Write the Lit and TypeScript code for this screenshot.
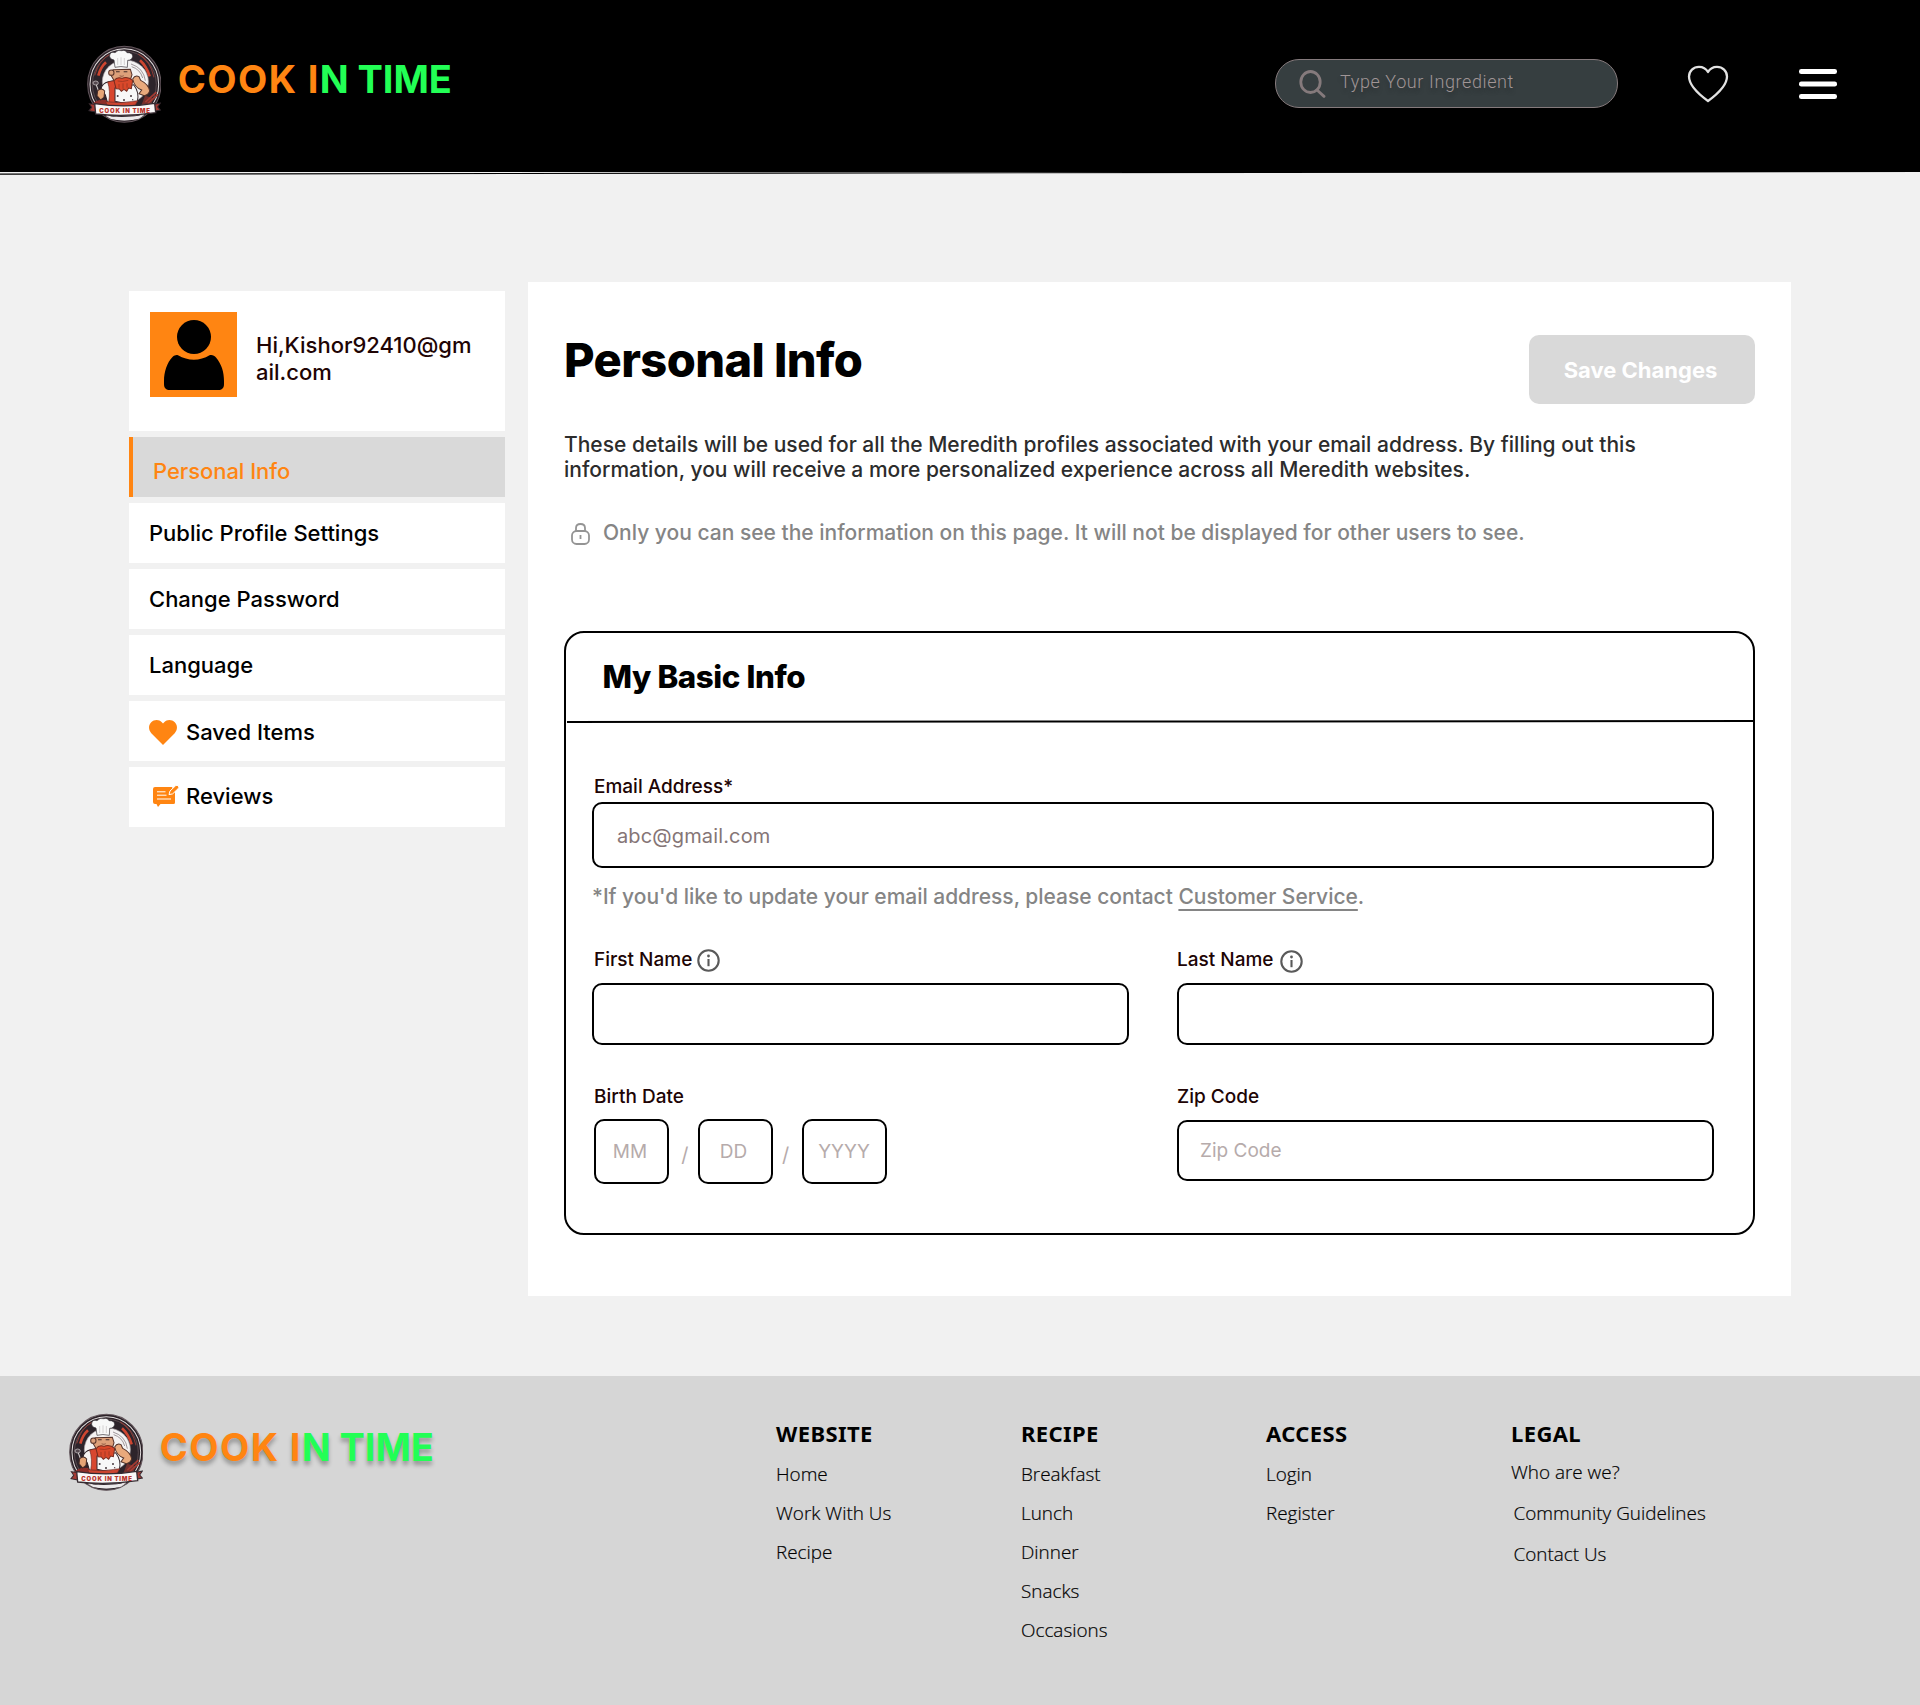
import { LitElement, html, svg, css } from "lit";
import { customElement, property } from "lit/decorators.js";
import { classMap } from "lit/directives/class-map.js";

const chefBadge = svg`
  <ellipse cx="162" cy="161" rx="110" ry="114" fill="#2a2127" stroke="#65585e" stroke-width="3"/>
  <ellipse cx="162" cy="161" rx="103" ry="107" fill="none" stroke="#e4dedf" stroke-width="3"/>
  <ellipse cx="162" cy="161" rx="96" ry="100" fill="#2d242b" stroke="#6f5f64" stroke-width="2"/>
  <path d="M84 135 Q91 109 107 95" fill="none" stroke="#cf4630" stroke-width="8"/>
  <path d="M209 89 Q228 106 238 137" fill="none" stroke="#cf4630" stroke-width="8"/>
  <path d="M73 134 Q86 88 118 71 M204 70 Q240 90 251 140" fill="none" stroke="#8d3d37" stroke-width="3"/>
  <ellipse cx="165" cy="153" rx="69" ry="65" fill="#f4f2f2" stroke="#afa8ab" stroke-width="2"/>
  <path d="M182 100 Q220 112 225 150 M184 108 Q210 116 217 142" fill="none" stroke="#74696e" stroke-width="2"/>
  <path d="M224 195 L250 203 L240 224 L213 224 Z" fill="#74302d"/>
  <path d="M225 214 L258 184 M232 219 L263 191" stroke="#a63b32" stroke-width="5"/>
  <path d="M64 223 Q78 203 112 208 L114 226 Z" fill="#8d2f2a"/>
  <path d="M92 173 Q96 158 114 153 L136 149 L135 217 L112 217 L105 193 Z" fill="#f7f4f2" stroke="#2b2025" stroke-width="3"/>
  <path d="M112 154 L137 149 L136 217 L115 216 Q121 181 112 154 Z" fill="#d8472f" stroke="#6e2922" stroke-width="2"/>
  <path d="M134 172 L190 162 Q208 186 201 212 Q168 222 134 212 Z" fill="#f8f8f8" stroke="#352a30" stroke-width="3"/>
  <circle cx="142" cy="196" r="3" fill="#46383e"/><circle cx="161" cy="208" r="3" fill="#46383e"/>
  <circle cx="182" cy="196" r="3" fill="#46383e"/><circle cx="187" cy="207" r="2" fill="#46383e"/>
  <path d="M187 145 Q194 132 206 138 L211 149 Q234 160 238 181 Q234 193 222 195 L206 189 L214 178 Q192 170 187 145 Z" fill="#e9a97c" stroke="#513129" stroke-width="3"/>
  <path d="M128 117 L180 116 L185 132 L179 151 L132 151 L121 132 Z" fill="#dda07a" stroke="#563229" stroke-width="3"/>
  <circle cx="123" cy="126" r="8" fill="#dda07a" stroke="#563229" stroke-width="3"/>
  <path d="M137 123 h11 M160 123 h11" stroke="#422b28" stroke-width="3"/>
  <path d="M148 135 Q154 139 160 135" fill="none" stroke="#8c5542" stroke-width="3"/>
  <path d="M131 150 Q140 137 155 143 Q172 136 187 149 L183 174 L175 172 L169 182 L161 176 L153 182 L147 175 L137 174 Z" fill="#d9482a" stroke="#762c20" stroke-width="3"/>
  <path d="M142 151 Q155 155 174 149 M146 160 V171 M158 158 V174 M170 158 V171" fill="none" stroke="#8d301f" stroke-width="2"/>
  <path d="M134 110 L131 88 Q116 85 118 73 Q121 62 134 66 Q143 56 154 60 Q166 57 170 66 Q186 65 187 77 Q185 89 172 89 L171 110 Q151 105 134 110 Z" fill="#f8f8f8" stroke="#38333a" stroke-width="2"/>
  <path d="M142 82 V103 M152 80 V103 M162 82 V103" stroke="#c2bec0" stroke-width="2"/>
  <ellipse cx="76" cy="157" rx="8" ry="6" fill="#55484f" stroke="#dad5d6" stroke-width="2"/>
  <path d="M78 163 L88 190" stroke="#d6d0d0" stroke-width="3"/>
  <path d="M82 180 Q93 169 103 181 L101 200 L91 208 L80 195 Z" fill="#e5a576" stroke="#4a2d27" stroke-width="3"/>
  <path d="M106 213 Q155 220 202 210 L195 223 Q154 232 111 225 Z" fill="#cc4530" stroke="#732c25" stroke-width="2"/>
  <path d="M57 219 L82 222 L82 245 L56 240 L64 230 Z M270 217 L245 222 L245 243 L270 238 L262 229 Z" fill="#a63a33" stroke="#352a30" stroke-width="3"/>
  <path d="M73 219 Q164 233 253 218 L256 246 Q164 260 76 250 Z" fill="#faf8f8" stroke="#352a30" stroke-width="4"/>
  <path d="M106 256 Q163 263 222 253 L206 264 Q164 273 122 265 Z" fill="#ece9ea"/>
  <text x="87" y="246" class="ribbon" textLength="152" lengthAdjust="spacing">COOK IN TIME</text>
`;

@customElement("brand-logo")
export class BrandLogo extends LitElement {
  @property({ type: Boolean }) shadow = false;

  static styles = css`
    :host { display: block; }
    .brand { display: flex; align-items: flex-start; }
    .badge { display: block; width: 74.7px; height: 78.7px; flex: none; }
    .ribbon { font: 900 18px Inter, sans-serif; fill: #b8352c; }
    .name {
      font: 700 38px/46px Inter, sans-serif;
      margin: 11px 0 0 16.4px;
      white-space: nowrap;
      color: #ff8512;
      letter-spacing: 1.4px;
    }
    .rest { color: #22ff55; letter-spacing: -0.1px; }
    .shadow { text-shadow: 0 4px 4px rgba(0, 0, 0, 0.3); }
  `;

  render() {
    return html`<div class="brand">
      <svg class="badge" viewBox="50 43 224 236">${chefBadge}</svg>
      <div class=${classMap({ name: true, shadow: this.shadow })}>COOK I<span class="rest">N TIME</span></div>
    </div>`;
  }
}

@customElement("site-header")
export class SiteHeader extends LitElement {
  static styles = css`
    :host { display: block; }
    .bar { height: 172px; background: #000; display: flex; align-items: flex-start; }
    .logo { margin: 45px 0 0 86.7px; }
    .search {
      box-sizing: border-box;
      width: 343px; height: 49px;
      margin: 59px 0 0 auto;
      border: 1px solid #857a7c; border-radius: 24px;
      background: #363e40;
      display: flex; align-items: flex-start;
    }
    .glass { width: 27px; height: 28px; margin: 10px 0 0 22.5px; }
    .hint {
      font: 300 18px/22px Roboto, sans-serif;
      letter-spacing: 0.6px;
      margin: 11px 0 0 14.5px;
      color: #a09596;
      text-shadow: 0 4px 4px rgba(0, 0, 0, 0.25);
    }
    .heart { width: 42px; height: 38px; margin: 65px 0 0 69px; }
    .menu { width: 38px; height: 30px; margin: 69px 83px 0 70px; }
    .rule { display: block; width: 1920px; height: 4px; }
  `;

  render() {
    return html`
      <header class="bar">
        <brand-logo class="logo"></brand-logo>
        <div class="search">
          <svg class="glass" viewBox="0 0 27 28" fill="none" stroke="#857a7c" stroke-width="2.8" stroke-linecap="round">
            <ellipse cx="11.5" cy="12" rx="9.7" ry="10.5"/><path d="M18 20 L25 26.4"/>
          </svg>
          <span class="hint">Type Your Ingredient</span>
        </div>
        <svg class="heart" viewBox="0 0 42 38" fill="none" stroke="#e2e2e2" stroke-width="2.3" stroke-linejoin="round">
          <path d="M21 36 C10 28 2 20 2 11.5 C2 6 6.5 1.8 12 1.8 C16 1.8 19 3.6 21 7 C23 3.6 26 1.8 30 1.8 C35.5 1.8 40 6 40 11.5 C40 20 32 28 21 36 Z"/>
        </svg>
        <svg class="menu" viewBox="0 0 38 30" fill="#fff">
          <rect width="38" height="5" rx="2.3"/><rect y="12.5" width="38" height="5" rx="2.3"/><rect y="25" width="38" height="5" rx="2.3"/>
        </svg>
      </header>
      <svg class="rule" viewBox="0 0 1920 4"><path d="M0 2.2 L1920 -0.5" stroke="#000" stroke-width="1.2"/></svg>
    `;
  }
}

const heartIcon = html`<svg viewBox="0 0 28 25" width="28" height="25" fill="#ff8512">
  <path d="M14 25 L2.3 13.2 C-0.7 10 -0.7 5.2 2.2 2.3 C5.2 -0.7 10 -0.7 12.8 2.2 L14 3.4 L15.2 2.2 C18 -0.7 22.8 -0.7 25.8 2.3 C28.7 5.2 28.7 10 25.7 13.2 Z"/>
</svg>`;

const reviewIcon = html`<svg viewBox="0 0 26 22" width="26" height="22">
  <path d="M2 2 H19 L22 8 V17.5 Q22 19 20.5 19 H7.5 L5 22 L3.5 19 H2 Q0 19 0 17 V4 Q0 2 2 2 Z" fill="#ff8512"/>
  <path d="M4 6.8 H12.5 M4 10.2 H13.5 M4 14 H18" stroke="#fff" stroke-width="1" />
  <path d="M16 9.6 L17 6 L22.5 0.8 Q24 -0.3 25.4 1 Q26.4 2.3 25.2 3.6 L19.6 8.9 Z" fill="#ff8512" stroke="#fff" stroke-width="1"/>
</svg>`;

@customElement("account-menu")
export class AccountMenu extends LitElement {
  static styles = css`
    :host { display: flex; flex-direction: column; gap: 6px; width: 376px; font: 500 22px/27px Inter, sans-serif; color: #000; }
    .profile { display: flex; align-items: flex-start; height: 119px; padding: 21px 0 0 21px; background: #fff; }
    .avatar { width: 87px; height: 85px; background: #ff8512; flex: none; }
    .greeting { margin: 20px 0 0 19px; width: 219px; color: #200404; white-space: nowrap; }
    .item { box-sizing: border-box; height: 60px; padding-left: 20px; background: #fff; display: flex; align-items: center; }
    .item svg { flex: none; }
    .active { border-left: 4px solid #ff8512; background: #d9d9d9; color: #ff8512; letter-spacing: -0.06px; padding-top: 9px; }
    .saved { gap: 9px; padding-top: 2px; }
    .saved svg { margin-top: 1px; }
    .reviews { gap: 7px; padding: 0 0 2px 24px; }
  `;

  render() {
    return html`
      <section class="profile">
        <svg class="avatar" viewBox="0 0 87 85">
          <circle cx="44" cy="25" r="17"/>
          <path d="M28 43.3 C38 49.2 50 49.2 59.5 43.3 C62 42.4 64.5 43.7 66 45.5 C71.5 52 74 60 74 69 V72 C74 76 72 78 68 78 H20 C16 78 14 76 14 72 V69 C14 60 17 50.5 22.5 45 C24.5 43.2 26.5 42.6 28 43.3 Z"/>
        </svg>
        <div class="greeting">Hi,Kishor92410@gm<br>ail.com</div>
      </section>
      <div class="item active">Personal Info</div>
      <div class="item">Public Profile Settings</div>
      <div class="item">Change Password</div>
      <div class="item">Language</div>
      <div class="item saved">${heartIcon}<span>Saved Items</span></div>
      <div class="item reviews">${reviewIcon}<span>Reviews</span></div>
    `;
  }
}

const infoIcon = html`<svg class="info" viewBox="0 0 23 23" width="23" height="23" fill="none" stroke="#5a5a5a" stroke-width="2.1">
  <circle cx="11.5" cy="11.5" r="10.2"/><path d="M11.5 10 V17.2"/><circle cx="11.5" cy="7" r="1.4" fill="#5a5a5a" stroke="none"/>
</svg>`;

@customElement("personal-info")
export class PersonalInfo extends LitElement {
  static styles = css`
    :host {
      display: block; box-sizing: border-box;
      width: 1263px; height: 1014px; padding: 0 36px;
      background: #fff;
      font: 500 21px/25px Inter, sans-serif;
    }
    h1, h2, p { margin: 0; }
    .top { display: flex; justify-content: space-between; align-items: flex-start; height: 122px; }
    h1 { font: 800 47px/56px Inter, sans-serif; letter-spacing: -0.6px; margin: 50px 0 0 0; }
    .save {
      width: 226px; height: 69px; margin-top: 53px; padding: 1px 3px 0 0;
      border: 0; border-radius: 10px; background: #d9d9d9;
      color: #fff; font: 700 22px/27px Inter, sans-serif;
    }
    .about { margin-top: 28px; white-space: nowrap; color: #2c2c2c; }
    .privacy { margin-top: 38px; padding-left: 7px; display: flex; color: #858585; white-space: nowrap; }
    .lock { width: 19px; height: 22px; margin: 3px 13px 0 0; }
    .panel { box-sizing: border-box; margin-top: 86px; height: 604px; border: 2px solid #000; border-radius: 20px; }
    h2 { font: 800 31.3px/88px Inter, sans-serif; letter-spacing: -0.4px; height: 87px; padding-left: 36.5px; }
    .divider { display: block; width: 1187px; height: 4px; }
    .form { padding: 51px 0 0 26px; width: 1122px; }
    .label { display: flex; align-items: flex-start; height: 23px; padding-left: 2px; font: 500 19px/23px Inter, sans-serif; color: #200404; white-space: nowrap; }
    .right .label { padding-left: 0; }
    .info { margin: 1px 0 0 5px; }
    .right .info { margin: 2px 0 0 6px; }
    input {
      display: block; box-sizing: border-box; width: 100%;
      border: 2px solid #000; border-radius: 10px; background: #fff; padding: 0 0 0 21px;
      font: 400 19px/23px Inter, sans-serif;
    }
    input::placeholder { color: #b6abab; opacity: 1; }
    .email { height: 66px; margin-top: 4px; padding: 2px 0 0 23px; font-size: 20px; letter-spacing: 0.14px; }
    .email::placeholder { color: #857576; }
    .help { margin-top: 16px; color: #858585; white-space: nowrap; letter-spacing: -0.027px; }
    .link { text-decoration: underline; text-decoration-thickness: 1.5px; text-underline-offset: 4.5px; text-decoration-skip-ink: none; }
    .columns { display: grid; grid-template-columns: 537px 537px; gap: 48px; margin-top: 39px; }
    .columns + .columns { margin-top: 40px; }
    .name { height: 62px; margin-top: 12px; }
    .zip { height: 61px; margin-top: 12px; }
    .date { display: flex; margin: 11px 0 0 2px; }
    .date input { width: 75px; height: 65px; padding: 0 3px 1px 0; text-align: center; flex: none; }
    .date .day { padding-right: 4px; }
    .date .year { width: 85px; padding-right: 1px; }
    .slash { width: 29px; text-align: center; color: #b6abab; font: 400 20px/24px Inter, sans-serif; padding: 24px 0 0 2.5px; box-sizing: border-box; }
    .slash.second { padding-left: 0; padding-right: 4px; }
  `;

  render() {
    return html`
      <div class="top"><h1>Personal Info</h1><button class="save">Save Changes</button></div>
      <p class="about">These details will be used for all the Meredith profiles associated with your email address. By filling out this<br>information, you will receive a more personalized experience across all Meredith websites.</p>
      <p class="privacy">
        <svg class="lock" viewBox="0 0 19 22" fill="none" stroke="#949494" stroke-width="1.8">
          <path d="M5 8 V5 Q5 1 9.5 1 Q14 1 14 5 V8"/><rect x="1" y="8" width="17" height="13" rx="4.5"/><path d="M9.5 12 V16"/>
        </svg>
        <span>Only you can see the information on this page. It will not be displayed for other users to see.</span>
      </p>
      <section class="panel">
        <h2>My Basic Info</h2>
        <svg class="divider" viewBox="0 0 1187 4"><path d="M1 2 L1187 1" stroke="#000" stroke-width="2"/></svg>
        <div class="form">
          <div class="label">Email Address*</div>
          <input class="email" placeholder="abc@gmail.com">
          <p class="help">*If you'd like to update your email address, please contact <span class="link">Customer Service</span>.</p>
          <div class="columns">
            <div><div class="label">First Name${infoIcon}</div><input class="name"></div>
            <div class="right"><div class="label">Last Name${infoIcon}</div><input class="name"></div>
          </div>
          <div class="columns">
            <div>
              <div class="label">Birth Date</div>
              <div class="date">
                <input placeholder="MM"><span class="slash">/</span>
                <input class="day" placeholder="DD"><span class="slash second">/</span>
                <input class="year" placeholder="YYYY">
              </div>
            </div>
            <div class="right"><div class="label">Zip Code</div><input class="zip" placeholder="Zip Code"></div>
          </div>
        </div>
      </section>
    `;
  }
}

const footerColumns = [
  { title: "WEBSITE", links: ["Home", "Work With Us", "Recipe"] },
  { title: "RECIPE", links: ["Breakfast", "Lunch", "Dinner", "Snacks", "Occasions"] },
  { title: "ACCESS", links: ["Login", "Register"] },
  { title: "LEGAL", links: ["Who are we?", "Community Guidelines", "Contact Us"] },
];

@customElement("site-footer")
export class SiteFooter extends LitElement {
  static styles = css`
    :host { display: block; }
    footer { height: 329px; background: #d6d6d6; display: flex; align-items: flex-start; }
    .logo { width: 707.3px; margin: 37.3px 0 0 68.7px; }
    .column { width: 245px; padding-top: 42px; white-space: nowrap; }
    h3 { margin: 0; font: 700 22px/30px "Noto Sans", sans-serif; letter-spacing: 0.4px; }
    .links { margin-top: 7px; font: 300 18.9px/39px "Open Sans", sans-serif; color: #000; -webkit-text-stroke: 0.2px #000; }
    .legal .links { margin-top: 4px; line-height: 41px; }
    .legal .link + .link { padding-left: 2.5px; }
  `;

  render() {
    return html`<footer>
      <brand-logo class="logo" shadow></brand-logo>
      ${footerColumns.map((c) => html`<nav class=${classMap({ column: true, legal: c.title === "LEGAL" })}>
        <h3>${c.title}</h3>
        <div class="links">${c.links.map((l) => html`<div class="link">${l}</div>`)}</div>
      </nav>`)}
    </footer>`;
  }
}

@customElement("app-root")
export class AppRoot extends LitElement {
  static styles = css`
    :host { display: block; width: 1920px; height: 1705px; background: #f1f1f1; overflow: hidden; }
    .content { display: flex; align-items: flex-start; gap: 23px; height: 1094px; padding: 106px 0 0 129px; }
    .menu { margin-top: 9px; }
  `;

  render() {
    return html`
      <site-header></site-header>
      <main class="content">
        <account-menu class="menu"></account-menu>
        <personal-info></personal-info>
      </main>
      <site-footer></site-footer>
    `;
  }
}
